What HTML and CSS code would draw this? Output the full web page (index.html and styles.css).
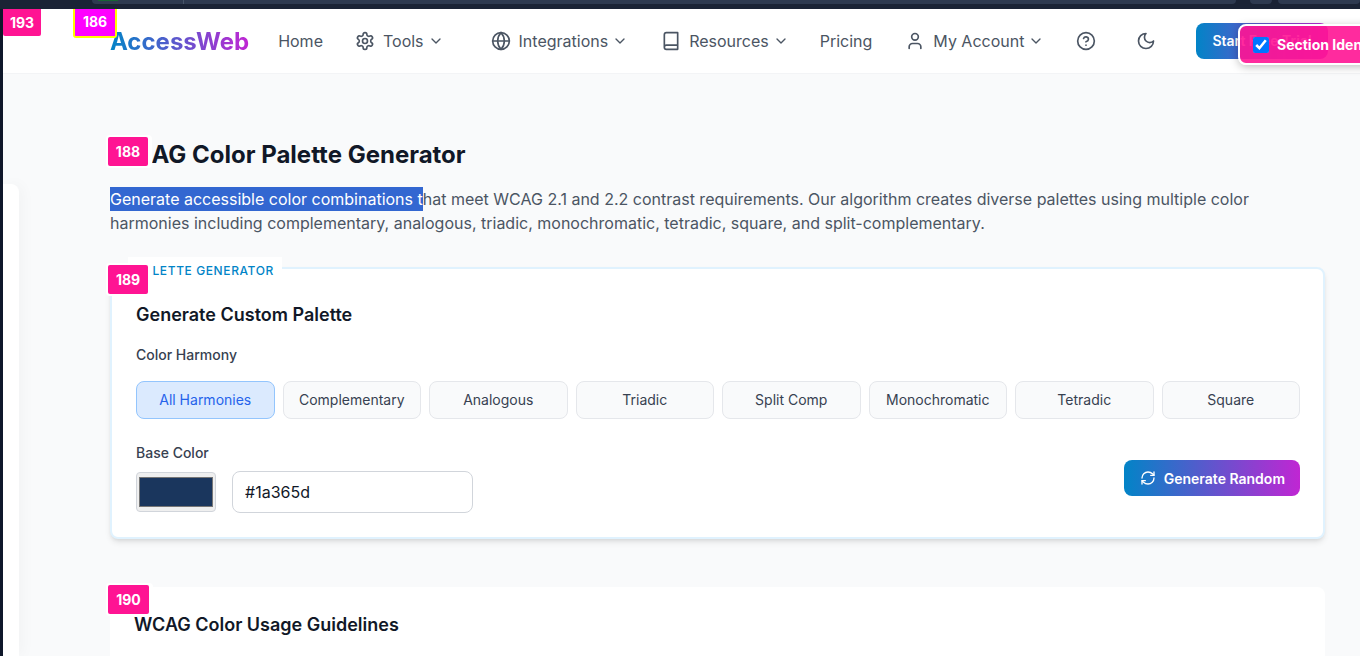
FILE: index.html
```html
<!DOCTYPE html>
<html>
<head>
  <title>WCAG Color Palette Generator</title>
  <link rel="stylesheet" href="styles.css">
</head>
<body>
  <div class="browser-strip">
    <div class="strip-box strip-url"><span class="strip-green"></span><span class="strip-divider"></span></div>
    <div class="strip-box strip-small"></div>
    <div class="strip-box strip-last"></div>
  </div>
  <div class="page">
    <div class="left-edge"></div>
    <div class="sidebar-peek"></div>
    <header class="topbar">
      <a class="logo">AccessWeb</a>
      <nav class="nav">
        <a class="nav-item nav-home">Home</a>
        <a class="nav-item nav-tools">
          <svg class="icon" viewBox="0 0 24 24"><path d="M12.22 2h-.44a2 2 0 0 0-2 2v.18a2 2 0 0 1-1 1.73l-.43.25a2 2 0 0 1-2 0l-.15-.08a2 2 0 0 0-2.73.73l-.22.38a2 2 0 0 0 .73 2.73l.15.1a2 2 0 0 1 1 1.72v.51a2 2 0 0 1-1 1.74l-.15.09a2 2 0 0 0-.73 2.73l.22.38a2 2 0 0 0 2.73.73l.15-.08a2 2 0 0 1 2 0l.43.25a2 2 0 0 1 1 1.73V20a2 2 0 0 0 2 2h.44a2 2 0 0 0 2-2v-.18a2 2 0 0 1 1-1.73l.43-.25a2 2 0 0 1 2 0l.15.08a2 2 0 0 0 2.73-.73l.22-.39a2 2 0 0 0-.73-2.73l-.15-.08a2 2 0 0 1-1-1.74v-.5a2 2 0 0 1 1-1.74l.15-.09a2 2 0 0 0 .73-2.73l-.22-.38a2 2 0 0 0-2.73-.73l-.15.08a2 2 0 0 1-2 0l-.43-.25a2 2 0 0 1-1-1.73V4a2 2 0 0 0-2-2z"/><circle cx="12" cy="12" r="3"/></svg>
          Tools
          <svg class="chev" viewBox="0 0 24 24"><path d="m6 9 6 6 6-6"/></svg>
        </a>
        <a class="nav-item nav-integrations">
          <svg class="icon" viewBox="0 0 24 24"><circle cx="12" cy="12" r="10"/><path d="M12 2a14.5 14.5 0 0 0 0 20 14.5 14.5 0 0 0 0-20"/><path d="M2 12h20"/></svg>
          Integrations
          <svg class="chev" viewBox="0 0 24 24"><path d="m6 9 6 6 6-6"/></svg>
        </a>
        <a class="nav-item nav-resources">
          <svg class="icon" viewBox="0 0 24 24"><path d="M4 19.5v-15A2.5 2.5 0 0 1 6.5 2H20v20H6.5a2.5 2.5 0 0 1 0-5H20"/></svg>
          Resources
          <svg class="chev" viewBox="0 0 24 24"><path d="m6 9 6 6 6-6"/></svg>
        </a>
        <a class="nav-item nav-pricing">Pricing</a>
        <a class="nav-item nav-account">
          <svg class="icon" viewBox="0 0 24 24"><path d="M19 21v-2a4 4 0 0 0-4-4H9a4 4 0 0 0-4 4v2"/><circle cx="12" cy="7" r="4"/></svg>
          My Account
          <svg class="chev" viewBox="0 0 24 24"><path d="m6 9 6 6 6-6"/></svg>
        </a>
        <a class="nav-item nav-help">
          <svg class="icon" viewBox="0 0 24 24"><circle cx="12" cy="12" r="10"/><path d="M9.09 9a3 3 0 0 1 5.83 1c0 2-3 3-3 3"/><path d="M12 17h.01"/></svg>
        </a>
        <a class="nav-item nav-theme">
          <svg class="icon" viewBox="0 0 24 24"><path d="M12 3a6 6 0 0 0 9 9 9 9 0 1 1-9-9Z"/></svg>
        </a>
        <a class="trial-btn">Start Free Trial</a>
      </nav>
    </header>

    <main class="content">
      <h1 class="page-title">WCAG Color Palette Generator</h1>
      <p class="intro"><span class="selected">Generate accessible color combinations t</span>hat meet WCAG 2.1 and 2.2 contrast requirements. Our algorithm creates diverse palettes using multiple color harmonies including complementary, analogous, triadic, monochromatic, tetradic, square, and split-complementary.</p>

      <section class="generator">
        <span class="tag">PALETTE GENERATOR</span>
        <h2 class="card-title">Generate Custom Palette</h2>
        <div class="field-label">Color Harmony</div>
        <div class="harmonies">
          <button class="harmony active">All Harmonies</button>
          <button class="harmony">Complementary</button>
          <button class="harmony">Analogous</button>
          <button class="harmony">Triadic</button>
          <button class="harmony">Split Comp</button>
          <button class="harmony">Monochromatic</button>
          <button class="harmony">Tetradic</button>
          <button class="harmony">Square</button>
        </div>
        <div class="base-row">
          <div>
            <div class="field-label base-label">Base Color</div>
            <div class="base-inputs">
              <div class="swatch"><div class="swatch-fill"></div></div>
              <input class="hex" type="text" value="#1a365d">
            </div>
          </div>
          <button class="random-btn">
            <svg class="refresh" viewBox="0 0 24 24"><path d="M3 12a9 9 0 0 1 9-9 9.75 9.75 0 0 1 6.74 2.74L21 8"/><path d="M21 3v5h-5"/><path d="M21 12a9 9 0 0 1-9 9 9.75 9.75 0 0 1-6.74-2.74L3 16"/><path d="M8 16H3v5"/></svg>
            Generate Random
          </button>
        </div>
      </section>

      <section class="guidelines">
        <h2 class="guidelines-title">WCAG Color Usage Guidelines</h2>
      </section>
    </main>

    <span class="badge badge-193">193</span>
    <span class="badge badge-186">186</span>
    <span class="badge badge-188">188</span>
    <span class="badge badge-189">189</span>
    <span class="badge badge-190">190</span>
    <label class="section-toggle"><input type="checkbox" checked> Section Identifiers</label>
  </div>
</body>
</html>
```

FILE: styles.css
```css
* {
  box-sizing: border-box;
}

html,
body {
  margin: 0;
  padding: 0;
  height: 100%;
  overflow: hidden;
}

body {
  font-family: Inter, "Liberation Sans", sans-serif;
  background: #1a2233;
  color: #111827;
}

/* sliver of the browser chrome above the page */
.browser-strip {
  display: flex;
  height: 9px;
  padding-left: 92px;
  background: #1a2335;
}

.strip-box {
  position: relative;
  height: 4px;
  background: #2e3a50;
  border-radius: 0 0 4px 4px;
}

.strip-url {
  width: 1144px;
}

.strip-green {
  position: absolute;
  left: 6px;
  top: 0;
  width: 20px;
  height: 1px;
  background: #166534;
}

.strip-divider {
  position: absolute;
  left: 91px;
  top: 0;
  width: 1px;
  height: 4px;
  background: #475569;
}

.strip-small {
  width: 22px;
  margin-left: 14px;
}

.strip-last {
  flex: 1;
  margin-left: 6px;
}

.page {
  position: relative;
  height: 647px;
  background: #f9fafb;
  overflow: hidden;
}

.left-edge {
  position: absolute;
  left: 0;
  top: 0;
  bottom: 0;
  width: 3px;
  background: #0f172a;
  z-index: 2;
}

.sidebar-peek {
  position: absolute;
  left: 3px;
  top: 175px;
  bottom: 0;
  width: 16px;
  background: #fff;
  border-top-right-radius: 8px;
  box-shadow: 4px 0 14px rgba(0, 0, 0, 0.03);
}

/* top bar */
.topbar {
  position: relative;
  display: flex;
  align-items: center;
  height: 65px;
  padding-left: 110px;
  background: #fff;
  border-bottom: 1px solid #f3f4f6;
}

.logo {
  font-size: 24px;
  font-weight: 700;
  background: linear-gradient(to right, #0284c7, #c026d3);
  -webkit-background-clip: text;
  background-clip: text;
  color: transparent;
}

.nav {
  display: flex;
  align-items: center;
  margin-left: 29px;
}

.nav-item {
  display: flex;
  align-items: center;
  font-size: 16px;
  color: #4b5563;
  white-space: nowrap;
}

.icon {
  width: 20px;
  height: 20px;
  margin-right: 8px;
  fill: none;
  stroke: #4b5563;
  stroke-width: 2;
  stroke-linecap: round;
  stroke-linejoin: round;
}

.chev {
  width: 16px;
  height: 16px;
  margin-left: 4px;
  fill: none;
  stroke: #4b5563;
  stroke-width: 2;
  stroke-linecap: round;
  stroke-linejoin: round;
}

.nav-tools {
  margin-left: 32px;
}

.nav-integrations {
  margin-left: 47px;
}

.nav-resources {
  margin-left: 33px;
}

.nav-pricing {
  margin-left: 31px;
}

.nav-account {
  margin-left: 33px;
}

.nav-help {
  margin-left: 32px;
}

.nav-theme {
  margin-left: 40px;
}

.nav-help .icon,
.nav-theme .icon {
  margin-right: 0;
}

.trial-btn {
  display: block;
  margin-left: 40px;
  padding: 0 16px;
  height: 36px;
  line-height: 36px;
  border-radius: 8px;
  font-size: 14px;
  font-weight: 600;
  color: #fff;
  white-space: nowrap;
  background: linear-gradient(to right, #0284c7, #c026d3);
}

/* main content */
.content {
  padding: 65px 35px 0 110px;
}

.page-title {
  margin: 0;
  font-size: 24px;
  line-height: 32px;
  font-weight: 700;
  color: #111827;
}

.intro {
  margin: 16px 0 0;
  font-size: 16px;
  line-height: 24px;
  color: #4b5563;
}

.selected {
  display: inline-block;
  background: #3367d1;
  color: #fff;
}

.generator {
  position: relative;
  margin-top: 32px;
  height: 272px;
  padding: 32px 23px 0 24px;
  background: #fff;
  border: 2px solid #e0f2fe;
  border-radius: 8px;
  box-shadow: 0 4px 6px -1px rgba(0, 0, 0, 0.1), 0 2px 4px -2px rgba(0, 0, 0, 0.1);
}

.tag {
  position: absolute;
  left: 16px;
  top: -12px;
  padding: 0 8px;
  background: #fff;
  font-size: 12px;
  line-height: 27px;
  font-weight: 500;
  letter-spacing: 0.6px;
  color: #0284c7;
}

.card-title {
  margin: 0;
  font-size: 18px;
  line-height: 28px;
  font-weight: 600;
  color: #111827;
}

.field-label {
  margin-top: 16px;
  font-size: 14px;
  line-height: 20px;
  font-weight: 500;
  color: #374151;
}

.harmonies {
  display: grid;
  grid-template-columns: repeat(8, 1fr);
  gap: 8px;
  margin-top: 16px;
}

.harmony {
  height: 38px;
  padding: 0 0 1px;
  font-family: inherit;
  font-size: 14px;
  color: #374151;
  background: #f9fafb;
  border: 1px solid #e5e7eb;
  border-radius: 8px;
}

.harmony.active {
  color: #2563eb;
  background: #dbeafe;
  border-color: #93c5fd;
}

.base-row {
  display: flex;
  justify-content: space-between;
  align-items: center;
  margin-top: 24px;
}

.base-label {
  margin-top: 0;
}

.base-inputs {
  display: flex;
  align-items: center;
  gap: 16px;
  margin-top: 8px;
}

.swatch {
  width: 80px;
  height: 40px;
  padding: 4px 2px;
  background: #efefef;
  border: 1px solid #d1d5db;
  border-radius: 4px;
}

.swatch-fill {
  height: 100%;
  background: #1a365d;
  border: 1px solid #767676;
}

.hex {
  width: 241px;
  height: 42px;
  padding: 0 12px;
  font-family: inherit;
  font-size: 16px;
  color: #111827;
  border: 1px solid #d1d5db;
  border-radius: 8px;
  background: #fff;
}

.random-btn {
  display: flex;
  align-items: center;
  gap: 8px;
  height: 36px;
  padding: 0 15px 0 16px;
  font-family: inherit;
  font-size: 14px;
  font-weight: 600;
  color: #fff;
  border: none;
  border-radius: 8px;
  background: linear-gradient(to right, #0284c7, #c026d3);
}

.refresh {
  width: 16px;
  height: 16px;
  fill: none;
  stroke: #fff;
  stroke-width: 2;
  stroke-linecap: round;
  stroke-linejoin: round;
}

.guidelines {
  margin-top: 48px;
  height: 200px;
  padding: 24px;
  background: #fff;
  border-radius: 8px;
}

.guidelines-title {
  margin: 0;
  font-size: 18px;
  line-height: 28px;
  font-weight: 600;
  color: #111827;
}

/* debug overlay badges */
.badge {
  position: absolute;
  z-index: 5;
  display: flex;
  align-items: center;
  justify-content: center;
  height: 29px;
  font-size: 14px;
  font-weight: 700;
  color: #fff;
  background: #ff1493;
  border-radius: 2px;
  box-shadow: 0 0 0 2px #fff, 2px 0 0 2px #fff;
}

.badge-193 {
  left: 3px;
  top: 0;
  width: 38px;
  height: 27px;
  border-radius: 0 0 2px 2px;
  box-shadow: none;
}

.badge-186 {
  left: 73px;
  top: 0;
  width: 44px;
  height: 29px;
  padding-bottom: 2px;
  background: #ff00ff;
  border: 2px solid #ffff00;
  border-top: none;
  border-radius: 0 0 3px 3px;
  box-shadow: none;
}

.badge-188 {
  left: 108px;
  top: 128px;
  width: 40px;
}

.badge-189 {
  left: 108px;
  top: 256px;
  width: 40px;
}

.badge-190 {
  left: 108px;
  top: 576px;
  width: 41px;
}

.section-toggle {
  position: absolute;
  z-index: 6;
  left: 1238px;
  top: 15px;
  display: flex;
  align-items: center;
  gap: 8px;
  width: 200px;
  height: 41px;
  padding-left: 13px;
  font-size: 14px;
  font-weight: 700;
  color: #fff;
  white-space: nowrap;
  background: rgba(255, 20, 147, 0.9);
  border: 2px solid #fff;
  border-radius: 8px;
  box-shadow: 0 2px 8px rgba(0, 0, 0, 0.25);
}

.section-toggle input {
  width: 16px;
  height: 16px;
  margin: 0;
}
```
